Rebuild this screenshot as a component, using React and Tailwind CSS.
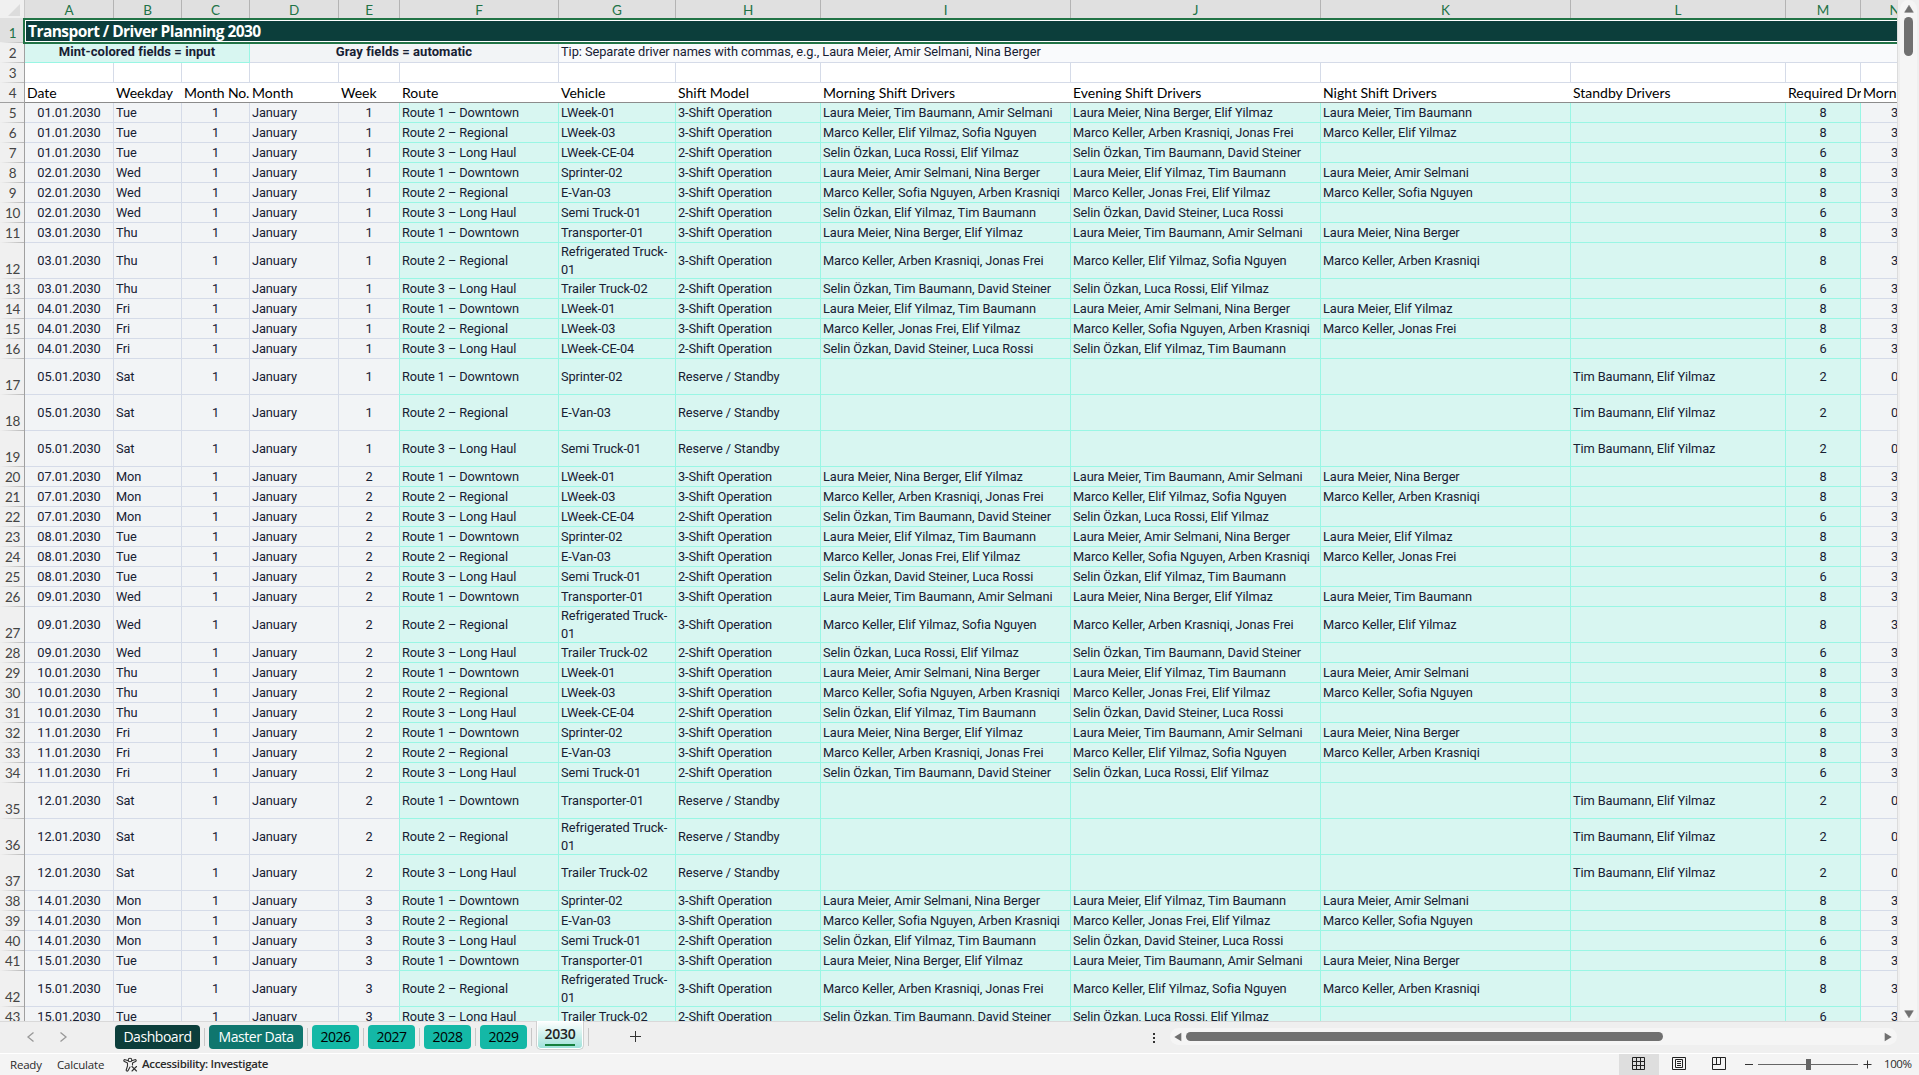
import clsx from "clsx";

const GRID = "grid grid-cols-[25px_89px_68px_68px_89px_61px_159px_117px_145px_250px_250px_250px_215px_75px_68px]";

const COLUMNS = ["A", "B", "C", "D", "E", "F", "G", "H", "I", "J", "K", "L", "M", "N"];

const HEADINGS = [
  "Date",
  "Weekday",
  "Month No.",
  "Month",
  "Week",
  "Route",
  "Vehicle",
  "Shift Model",
  "Morning Shift Drivers",
  "Evening Shift Drivers",
  "Night Shift Drivers",
  "Standby Drivers",
  "Required Dr",
  "Morn"
];

const ROUTES = ["Route 1 – Downtown", "Route 2 – Regional", "Route 3 – Long Haul"];

const FLEET = {
  lweek: ["LWeek-01", "LWeek-03", "LWeek-CE-04"],
  van: ["Sprinter-02", "E-Van-03", "Semi Truck-01"],
  transport: ["Transporter-01", "Refrigerated Truck-01", "Trailer Truck-02"]
};

const DRIVERS = {
  A: "Amir Selmani",
  D: "David Steiner",
  E: "Elif Yilmaz",
  J: "Jonas Frei",
  K: "Arben Krasniqi",
  L: "Laura Meier",
  M: "Marco Keller",
  N: "Nina Berger",
  R: "Luca Rossi",
  S: "Sofia Nguyen",
  T: "Tim Baumann",
  Z: "Selin Özkan"
};

// crews: one entry per route, "morning evening night"
const DAYS = [
  { date: "01.01.2030", day: "Tue", week: 1, fleet: "lweek", crews: ["LTA LNE LT", "MES MKJ ME", "ZRE ZTD"] },
  { date: "02.01.2030", day: "Wed", week: 1, fleet: "van", crews: ["LAN LET LA", "MSK MJE MS", "ZET ZDR"] },
  { date: "03.01.2030", day: "Thu", week: 1, fleet: "transport", crews: ["LNE LTA LN", "MKJ MES MK", "ZTD ZRE"] },
  { date: "04.01.2030", day: "Fri", week: 1, fleet: "lweek", crews: ["LET LAN LE", "MJE MSK MJ", "ZDR ZET"] },
  { date: "05.01.2030", day: "Sat", week: 1, fleet: "van", standby: "TE" },
  { date: "07.01.2030", day: "Mon", week: 2, fleet: "lweek", crews: ["LNE LTA LN", "MKJ MES MK", "ZTD ZRE"] },
  { date: "08.01.2030", day: "Tue", week: 2, fleet: "van", crews: ["LET LAN LE", "MJE MSK MJ", "ZDR ZET"] },
  { date: "09.01.2030", day: "Wed", week: 2, fleet: "transport", crews: ["LTA LNE LT", "MES MKJ ME", "ZRE ZTD"] },
  { date: "10.01.2030", day: "Thu", week: 2, fleet: "lweek", crews: ["LAN LET LA", "MSK MJE MS", "ZET ZDR"] },
  { date: "11.01.2030", day: "Fri", week: 2, fleet: "van", crews: ["LNE LTA LN", "MKJ MES MK", "ZTD ZRE"] },
  { date: "12.01.2030", day: "Sat", week: 2, fleet: "transport", standby: "TE" },
  { date: "14.01.2030", day: "Mon", week: 3, fleet: "van", crews: ["LAN LET LA", "MSK MJE MS", "ZET ZDR"] },
  { date: "15.01.2030", day: "Tue", week: 3, fleet: "transport", crews: ["LNE LTA LN", "MKJ MES MK", "ZTD ZRE"] }
];

const names = (codes = "") => [...codes].map((code) => DRIVERS[code]).join(", ");

const ROWS = DAYS.flatMap((entry) =>
  ROUTES.map((route, index) => {
    const [morning, evening, night] = (entry.crews?.[index] ?? "").split(" ");
    const vehicle = FLEET[entry.fleet][index];
    const model = entry.standby ? "Reserve / Standby" : night ? "3-Shift Operation" : "2-Shift Operation";
    return {
      tall: Boolean(entry.standby) || vehicle.startsWith("Refrigerated"),
      cells: [
        entry.date,
        entry.day,
        1,
        "January",
        entry.week,
        route,
        vehicle,
        model,
        names(morning),
        names(evening),
        names(night),
        names(entry.standby),
        entry.standby ? 2 : night ? 8 : 6,
        entry.standby ? 0 : 3
      ]
    };
  })
);

const CENTERED = [0, 2, 4, 12, 13];

function RowHeader({ number, selected, frozen }) {
  return (
    <div
      className={clsx(
        "relative flex items-end justify-center border-r border-[#a0a0a0] pb-px font-[Lato] text-[13.5px] leading-[17px] tracking-[-0.4px]",
        selected ? "bg-[#e0e0e0] text-[#217346]" : "bg-[#f0f0f0] text-[#444]"
      )}
    >
      <span className="-mr-px">{number}</span>
      <div className={clsx("absolute inset-x-0 bottom-0 h-px", frozen ? "bg-[#a0a0a0]" : "bg-linear-to-r from-[#f0f0f0] to-[#b8b8b8]")} />
    </div>
  );
}

function SheetRow({ row, number }) {
  return (
    <div className={clsx(GRID, row.tall ? "h-9" : "h-5")}>
      <RowHeader number={number} />
      {row.cells.map((value, index) => {
        const input = index >= 5 && index <= 12;
        return (
          <div
            key={COLUMNS[index]}
            className={clsx(
              "flex items-center overflow-hidden border-r border-b",
              index === 6 ? "leading-[18px]" : "whitespace-nowrap",
              CENTERED.includes(index) ? "justify-center" : "pl-0.5",
              input ? "border-[#99f6e4] bg-[#d8f6f1]" : "border-[#d5dbe8] bg-[#f2f4f6]",
              index === 4 && "border-r-[#99f6e4]"
            )}
          >
            <span>{value}</span>
          </div>
        );
      })}
    </div>
  );
}

function Sheet() {
  return (
    <div className="relative h-[1021px] w-[1897px] overflow-hidden bg-white font-[Roboto] text-[12.8px] tracking-[-0.1px] text-[#172033]">
      <div className={clsx(GRID, "h-[18px] bg-[#e0e0e0] font-[Lato] text-[13.5px] text-[#217346]")}>
        <div className="flex items-end justify-end border-r border-[#c8c8c8] bg-[#f0f0f0] pr-1 pb-0.5">
          <svg width="12" height="12" viewBox="0 0 12 12" fill="#dcdcdc">
            <path d="M12 0v12H0z" />
          </svg>
        </div>
        {COLUMNS.map((letter) => (
          <div key={letter} className="flex items-center justify-center border-r border-[#b4b4b4] pt-[3px] leading-none">
            {letter}
          </div>
        ))}
      </div>

      <div className={clsx(GRID, "h-[25px]")}>
        <RowHeader number={1} selected />
        <div className="col-span-14 flex items-center bg-[#0c3e3b] pt-px pl-[3px] font-['Open_Sans'] text-[15.5px] leading-5 font-bold tracking-[-0.56px] text-white">
          Transport / Driver Planning 2030
        </div>
      </div>

      <div className={clsx(GRID, "h-5 leading-4")}>
        <RowHeader number={2} />
        <div className="col-span-3 flex items-center justify-center border-r border-b border-[#99f6e4] bg-[#d8f6f1] pb-[2px] text-[13px] font-bold tracking-[0.05px]">
          Mint-colored fields = input
        </div>
        <div className="col-span-3 flex items-center justify-center border-r border-b border-[#d5dbe8] bg-[#f2f4f6] pb-[2px] text-[13px] font-bold tracking-[0.05px]">
          Gray fields = automatic
        </div>
        <div className="col-span-8 flex items-center border-b border-[#d5dbe8] bg-[#f9fafc] pb-[2px] pl-0.5 tracking-[-0.06px]">
          Tip: Separate driver names with commas, e.g., Laura Meier, Amir Selmani, Nina Berger
        </div>
      </div>

      <div className={clsx(GRID, "h-5")}>
        <RowHeader number={3} />
        {COLUMNS.map((letter) => (
          <div key={letter} className="border-r border-b border-[#d5dbe8]" />
        ))}
      </div>

      <div className={clsx(GRID, "h-5 font-[Lato] text-[14px] tracking-normal text-black")}>
        <RowHeader number={4} frozen />
        {HEADINGS.map((heading) => (
          <div
            key={heading}
            className={clsx(
              "flex items-center overflow-hidden border-b border-[#8c8c8c] pl-0.5 leading-[18px] whitespace-nowrap",
              heading === "Month No." && "tracking-[-0.15px]"
            )}
          >
            {heading}
          </div>
        ))}
      </div>

      {ROWS.map((row, index) => (
        <SheetRow key={index} row={row} number={index + 5} />
      ))}

      {/* selection frame around row 1 */}
      <div className="absolute top-[18px] left-[23px] h-[26px] w-[1900px] border-2 border-[#217346]">
        <div className="h-full border border-white" />
      </div>
    </div>
  );
}

function VerticalScrollbar() {
  return (
    <div className="flex w-[22px] justify-center border-l border-[#dcdcdc] bg-[#efefef]">
      <div className="flex h-[1023px] w-[17px] flex-col items-center rounded-full bg-[#f5f5f5] pt-[5px] pb-[5px]">
        <svg width="10" height="8" viewBox="0 0 10 8" fill="#707070">
          <path d="M5 0.3 9.3 7.3H0.7z" stroke="#707070" strokeWidth="0.6" strokeLinejoin="round" />
        </svg>
        <div className="mt-1 h-[39px] w-[9px] rounded-full bg-[#707070]" />
        <svg className="mt-auto" width="10" height="8" viewBox="0 0 10 8" fill="#707070">
          <path d="M5 7.7 9.3 0.7H0.7z" stroke="#707070" strokeWidth="0.6" strokeLinejoin="round" />
        </svg>
      </div>
    </div>
  );
}

const TABS = [
  { name: "Dashboard", className: "w-[85px] bg-[#0c3e3b] text-white" },
  { name: "Master Data", className: "w-[94px] bg-[#0f766e] text-white" },
  { name: "2026", className: "w-[47px] bg-[#14b8a6] text-black" },
  { name: "2027", className: "w-[47px] bg-[#14b8a6] text-black" },
  { name: "2028", className: "w-[47px] bg-[#14b8a6] text-black" },
  { name: "2029", className: "w-[47px] bg-[#14b8a6] text-black" }
];

function TabBar() {
  return (
    <div className="flex h-8 border-t border-[#d9d9d9] bg-[#efefef] font-['Open_Sans'] text-[14px]">
      <svg className="mt-[9px] ml-[26px]" width="42" height="12" viewBox="0 0 42 12" fill="none" stroke="#999" strokeWidth="1.3">
        <path d="M7.500 1.500 2 6l5.500 4.500M34.500 1.500 40 6l-5.500 4.500" />
      </svg>
      <div className="ml-[47px] flex">
        {TABS.map((tab) => (
          <div key={tab.name} className="flex">
            <div
              className={clsx(
                "mt-[3px] flex h-6 items-center justify-center rounded-[4px] pb-px tracking-[-0.45px]",
                tab.className
              )}
            >
              {tab.name}
            </div>
            <div className="mt-[6px] mr-1 ml-1 h-[18px] w-px bg-[#c6c6c6]" />
          </div>
        ))}
        <div className="-mt-px flex h-[29px] w-[48px] justify-center rounded-b-[5px] border border-t-0 border-[#d0d0d0] bg-linear-to-b from-white to-[#99e0d8] pt-[3px] font-semibold text-[#222] shadow-[inset_0_0_0_1px_white]">
          <span className="h-[22px] border-b-2 border-[#15803d] text-[14px] leading-[20px] tracking-[-0.3px]">2030</span>
        </div>
        <div className="mt-[6px] ml-1 h-[18px] w-px bg-[#c6c6c6]" />
      </div>
      <svg className="mt-[9px] ml-[41px]" width="12" height="12" viewBox="0 0 12 12" stroke="#333" strokeWidth="1">
        <path d="M5.500 0v11M0 5.500h11" />
      </svg>
      <svg className="mt-[11px] ml-auto" width="3" height="11" viewBox="0 0 3 11" fill="#333">
        <path d="M0 0h2v2H0zM0 4h2v2H0zM0 8h2v2H0z" />
      </svg>
      <div className="mt-1.5 mr-[22px] ml-[14px] flex h-[17px] w-[727px] items-center rounded-full bg-[#f5f5f5] pr-[5px] pl-1">
        <svg width="8" height="10" viewBox="0 0 8 10" fill="#707070">
          <path d="M0.300 5 7.300 0.700v8.600z" />
        </svg>
        <div className="ml-1 h-[9px] w-[477px] rounded-full bg-[#707070]" />
        <svg className="ml-auto" width="8" height="10" viewBox="0 0 8 10" fill="#707070">
          <path d="M7.700 5 0.700 0.700v8.600z" />
        </svg>
      </div>
    </div>
  );
}

function StatusBar() {
  return (
    <div className="flex h-[22px] items-center border-t border-white bg-[#f4f4f4] font-['Open_Sans'] text-[11.5px] tracking-[-0.2px] text-[#2b2b2b]">
      <span className="ml-[10px] w-[47px]">Ready</span>
      <span className="w-[66px]">Calculate</span>
      <svg width="16" height="16" viewBox="0 0 16 16" fill="none" stroke="#333" strokeWidth="1.1" strokeLinecap="round" strokeLinejoin="round">
        <circle cx="7" cy="3" r="1.800" />
        <path d="M5.300 3.800 2.200 2.700a1 1 0 0 0-.7 1.900L4.500 6v3l-1.300 4a1 1 0 0 0 1.800.7L7 10M8.700 3.800l3.100-1.100a1 1 0 0 1 .7 1.900L9.500 6v2M9 9.500l4.500 4.500M13.500 9.500 9 14" />
      </svg>
      <span className="ml-[3px] pb-px font-semibold tracking-[-0.34px]">Accessibility: Investigate</span>

      <div className="ml-auto flex h-full items-center">
        <div className="flex h-full w-10 items-center justify-center bg-[#dedede]">
          <svg className="-mt-0.5" width="14" height="14" viewBox="0 0 14 14" fill="none" stroke="#222">
            <path d="M0.500 0.500h12v12h-12zM4.500 0.500v12M8.500 0.500v12M0.500 4.500h12M0.500 8.500h12" />
          </svg>
        </div>
        <div className="flex w-10 justify-center">
          <svg className="-mt-0.5" width="14" height="14" viewBox="0 0 14 14" fill="none" stroke="#222">
            <path d="M0.500 0.500h13v12h-13zM3.500 2.500h7v8h-7zM5 4.500h4M5 6.500h4M5 8.500h4" />
          </svg>
        </div>
        <div className="flex w-10 justify-center">
          <svg className="-mt-0.5" width="14" height="14" viewBox="0 0 14 14" fill="none" stroke="#222">
            <path d="M0.500 0.500h13v12h-13zM4.500 0.500v7M0.500 7.500h8M8.500 0.500v7" />
          </svg>
        </div>
        <div className="ml-[6px] h-px w-2 bg-[#333]" />
        <div className="relative mx-[5px] h-px w-[100px] bg-[#666]">
          <div className="absolute -top-[5px] left-[48px] h-[11px] w-[5px] bg-[#666]" />
        </div>
        <svg width="9" height="9" viewBox="0 0 9 9" stroke="#333">
          <path d="M4.500 0.500v8M0.500 4.500h8" />
        </svg>
        <span className="mr-2 ml-[12px] w-[27px] pb-px tracking-[-0.4px]">100%</span>
      </div>
    </div>
  );
}

export default function App() {
  return (
    <div className="flex h-[1075px] w-[1919px] flex-col overflow-hidden bg-[#efefef]">
      <div className="flex h-[1021px]">
        <Sheet />
        <VerticalScrollbar />
      </div>
      <TabBar />
      <StatusBar />
    </div>
  );
}
